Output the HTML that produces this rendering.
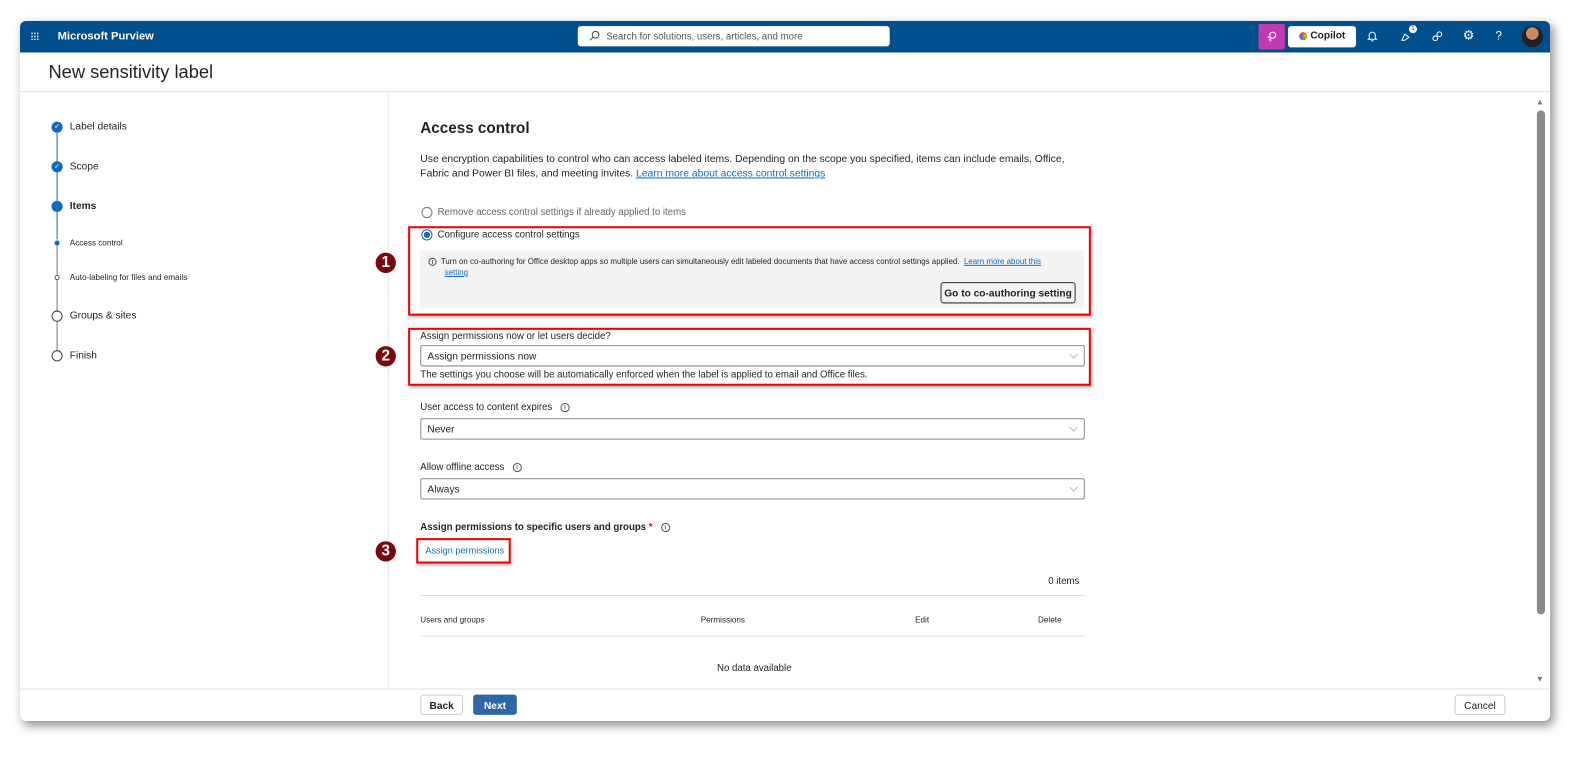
<!DOCTYPE html>
<html><head><meta charset="utf-8"><style>
*{box-sizing:border-box;margin:0;padding:0}
body{width:1593px;height:764px;background:#fff;font-family:"Liberation Sans",sans-serif;color:#242424;position:relative;overflow:hidden}
.a{position:absolute;white-space:nowrap}
#win{position:absolute;left:20px;top:21px;width:1506px;height:689px;background:#fff;border-radius:6px;box-shadow:3px 4px 10px rgba(0,0,0,.45);overflow:hidden;transform:scale(1.016);transform-origin:0 0}
.hdr{position:absolute;left:0;top:0;width:100%;height:31px;background:#004e8c}
.dd{position:absolute;height:21px;border:1px solid #8a8a8a;border-radius:2px;font-size:10px;padding:5px 6px}
.dd:after{content:"";position:absolute;right:7px;top:5px;width:5px;height:5px;border-right:1px solid #bbb;border-bottom:1px solid #bbb;transform:rotate(45deg)}
.red{position:absolute;border:2px solid #e00;box-shadow:1px 2px 3px rgba(0,0,0,.35)}
.num{position:absolute;width:20px;height:20px;border-radius:50%;background:#7a0a0a;color:#fff;font-weight:bold;font-size:15px;text-align:center;line-height:20px}
.info{display:inline-block;width:9px;height:9px;border:1px solid #555;border-radius:50%;font-size:7px;line-height:7px;text-align:center;vertical-align:middle}
.step{position:absolute;font-size:10px}
.btn{position:absolute;border:1px solid #8a8a8a;border-radius:3px;font-size:10px;font-weight:bold;text-align:center}
</style></head><body>
<div id="win">
<div class="hdr"></div>
<div class="a" style="left:10px;top:8px;color:#fff;font-size:12px;letter-spacing:-1px">⁝⁝⁝</div>
<div class="a" style="left:37px;top:9px;color:#fff;font-size:11px;font-weight:bold">Microsoft Purview</div>
<div class="a" style="left:549px;top:5px;width:307px;height:20px;background:#fff;border-radius:3px;font-size:9.5px;color:#555;padding:5px 0 0 28px">Search for solutions, users, articles, and more
<svg style="position:absolute;left:11px;top:4px" width="11" height="11" viewBox="0 0 11 11"><circle cx="6.5" cy="4.5" r="3.3" fill="none" stroke="#444"/><path d="M4.2 6.8 1 10" stroke="#444"/></svg></div>
<div class="a" style="left:1219px;top:3px;width:26px;height:25px;background:#c239b3;border-radius:2px"><svg width="26" height="25" viewBox="0 0 26 25"><circle cx="14" cy="11" r="3" fill="none" stroke="#fff"/><path d="M10 16l2-2M9 13l2 0M12 17l0-2" stroke="#fff"/></svg></div>
<div class="a" style="left:1248px;top:5px;width:67px;height:21px;background:#fff;border-radius:3px;font-size:10px;font-weight:bold;padding:4px 0 0 22px">Copilot<span style="position:absolute;left:11px;top:6px;width:8px;height:8px;border-radius:50%;background:conic-gradient(#f25022,#ffb900,#7fba00,#00a4ef,#c239b3,#f25022)"></span></div>
<svg class="a" style="left:1326px;top:9px" width="10" height="12" viewBox="0 0 10 12"><path d="M2 8V5a3 3 0 0 1 6 0v3l1 1H1z M4 10.5h2" fill="none" stroke="#fff"/></svg>
<svg class="a" style="left:1358px;top:9px" width="12" height="12" viewBox="0 0 12 12"><path d="M2 10l3-6 4 3-4 3z" fill="none" stroke="#fff"/></svg>
<div class="a" style="left:1367px;top:4px;width:8px;height:8px;border-radius:50%;background:#fff;color:#004e8c;font-size:6px;text-align:center;line-height:8px">1</div>
<svg class="a" style="left:1389px;top:9px" width="12" height="12" viewBox="0 0 12 12"><circle cx="4" cy="8" r="2.3" fill="none" stroke="#fff"/><circle cx="8" cy="4" r="2.3" fill="none" stroke="#fff"/></svg>
<div class="a" style="left:1420px;top:6px;color:#fff;font-size:13px">⚙</div>
<div class="a" style="left:1452px;top:7px;color:#fff;font-size:12px">?</div>
<div class="a" style="left:1478px;top:5px;width:21px;height:21px;border-radius:50%;background:radial-gradient(circle at 50% 35%,#c88a63 35%,#222 37%)"></div>

<div class="a" style="left:28px;top:40px;font-size:18px">New sensitivity label</div>
<div class="a" style="left:0;top:69px;width:100%;height:1px;background:#e0e0e0"></div>
<div class="a" style="left:362px;top:70px;width:1px;height:587px;background:#e6e6e6"></div>

<div class="a" style="left:36px;top:110px;width:1px;height:105px;background:#0f6cbd"></div>
<div class="a" style="left:36px;top:216px;width:1px;height:110px;background:#777"></div>
<div class="a" style="left:31px;top:99px;width:11px;height:11px;border-radius:50%;background:#0f6cbd;color:#fff;font-size:7px;text-align:center;line-height:11px">✓</div>
<div class="step" style="left:49px;top:99px">Label details</div>
<div class="a" style="left:31px;top:138px;width:11px;height:11px;border-radius:50%;background:#0f6cbd;color:#fff;font-size:7px;text-align:center;line-height:11px">✓</div>
<div class="step" style="left:49px;top:138px">Scope</div>
<div class="a" style="left:31px;top:177px;width:11px;height:11px;border-radius:50%;background:#0f6cbd"></div>
<div class="step" style="left:49px;top:177px;font-weight:bold">Items</div>
<div class="a" style="left:34px;top:216px;width:5px;height:5px;border-radius:50%;background:#0f6cbd"></div>
<div class="step" style="left:49px;top:214px;font-size:8px">Access control</div>
<div class="a" style="left:34px;top:250px;width:5px;height:5px;border-radius:50%;border:1px solid #555;background:#fff"></div>
<div class="step" style="left:49px;top:248px;font-size:8px">Auto-labeling for files and emails</div>
<div class="a" style="left:31px;top:285px;width:11px;height:11px;border-radius:50%;border:1.5px solid #444;background:#fff"></div>
<div class="step" style="left:49px;top:285px">Groups &amp; sites</div>
<div class="a" style="left:31px;top:324px;width:11px;height:11px;border-radius:50%;border:1.5px solid #444;background:#fff"></div>
<div class="step" style="left:49px;top:324px">Finish</div>

<div class="a" style="left:394px;top:97px;font-size:15px;font-weight:bold">Access control</div>
<div class="a" style="left:394px;top:130px;font-size:10.2px;line-height:14px">Use encryption capabilities to control who can access labeled items. Depending on the scope you specified, items can include emails, Office,<br>Fabric and Power BI files, and meeting invites. <span style="color:#0f6cbd;text-decoration:underline">Learn more about access control settings</span></div>
<div class="a" style="left:395px;top:183px;width:11px;height:11px;border-radius:50%;border:1px solid #777"></div>
<div class="a" style="left:411px;top:183px;font-size:9.5px;color:#666">Remove access control settings if already applied to items</div>
<div class="a" style="left:395px;top:205px;width:11px;height:11px;border-radius:50%;border:1px solid #0f6cbd;background:radial-gradient(#0f6cbd 45%,#fff 50%)"></div>
<div class="a" style="left:411px;top:205px;font-size:9.5px">Configure access control settings</div>
<div class="a" style="left:394px;top:226px;width:653px;height:57px;background:#f3f3f3"></div>
<div class="a" style="left:402px;top:231px;font-size:7.8px;line-height:11px"><span class="info" style="width:8px;height:8px">i</span>&nbsp; Turn on co-authoring for Office desktop apps so multiple users can simultaneously edit labeled documents that have access control settings applied. &nbsp;<span style="color:#0f6cbd;text-decoration:underline">Learn more about this</span><br><span style="margin-left:16px;color:#0f6cbd;text-decoration:underline">setting</span></div>
<div class="btn" style="left:906px;top:257px;width:133px;height:21px;border-color:#333;padding-top:5px">Go to co-authoring setting</div>
<div class="red" style="left:382px;top:202px;width:672px;height:88px"></div>
<div class="num" style="left:350px;top:228px">1</div>

<div class="a" style="left:394px;top:305px;font-size:9.5px">Assign permissions now or let users decide?</div>
<div class="dd" style="left:394px;top:319px;width:654px">Assign permissions now</div>
<div class="a" style="left:394px;top:343px;font-size:9.5px">The settings you choose will be automatically enforced when the label is applied to email and Office files.</div>
<div class="red" style="left:382px;top:302px;width:672px;height:57px"></div>
<div class="num" style="left:350px;top:320px">2</div>

<div class="a" style="left:394px;top:375px;font-size:9.5px">User access to content expires &nbsp;&nbsp;<span class="info">i</span></div>
<div class="dd" style="left:394px;top:391px;width:654px">Never</div>
<div class="a" style="left:394px;top:434px;font-size:9.5px">Allow offline access &nbsp;&nbsp;<span class="info">i</span></div>
<div class="dd" style="left:394px;top:450px;width:654px">Always</div>
<div class="a" style="left:394px;top:493px;font-size:9.5px;font-weight:bold">Assign permissions to specific users and groups <span style="color:#c50f1f">*</span> &nbsp;&nbsp;<span class="info" style="font-weight:normal">i</span></div>
<div class="red" style="left:390px;top:509px;width:93px;height:25px;background:#fff"></div>
<div class="a" style="left:399px;top:516px;font-size:9px;color:#0f6cbd">Assign permissions</div>
<div class="num" style="left:350px;top:512px">3</div>
<div class="a" style="left:1012px;top:546px;font-size:9.5px">0 items</div>
<div class="a" style="left:394px;top:565px;width:654px;height:1px;background:#e0e0e0"></div>
<div class="a" style="left:394px;top:585px;font-size:8px">Users and groups</div>
<div class="a" style="left:670px;top:585px;font-size:8px">Permissions</div>
<div class="a" style="left:881px;top:585px;font-size:8px">Edit</div>
<div class="a" style="left:1002px;top:585px;font-size:8px">Delete</div>
<div class="a" style="left:394px;top:605px;width:654px;height:1px;background:#e0e0e0"></div>
<div class="a" style="left:686px;top:632px;font-size:9.5px">No data available</div>

<div class="a" style="left:1492px;top:75px;font-size:8px;color:#777">▲</div>
<div class="a" style="left:1493px;top:88px;width:8px;height:496px;border-radius:4px;background:#8a8a8a"></div>
<div class="a" style="left:1492px;top:643px;font-size:8px;color:#777">▼</div>

<div class="a" style="left:0;top:657px;width:100%;height:1px;background:#e0e0e0"></div>
<div class="btn" style="left:394px;top:663px;width:42px;height:20px;border-color:#ccc;padding-top:5px">Back</div>
<div class="btn" style="left:446px;top:663px;width:43px;height:20px;background:#2f67a6;border-color:#2f67a6;color:#fff;padding-top:5px">Next</div>
<div class="btn" style="left:1412px;top:663px;width:50px;height:20px;border-color:#ccc;padding-top:5px;font-weight:normal">Cancel</div>
</div>
</body></html>
